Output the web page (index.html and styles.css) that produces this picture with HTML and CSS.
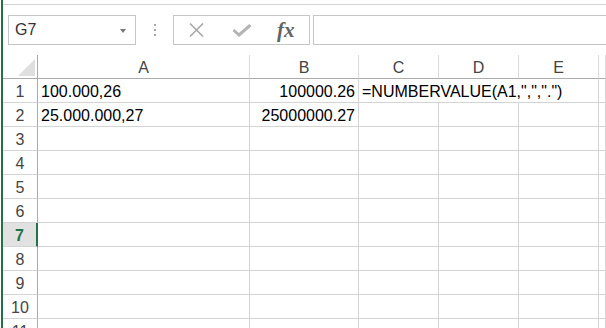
FILE: index.html
```html
<!DOCTYPE html>
<html lang="en">

<head>
    <meta charset="UTF-8">
    <title>NUMBERVALUE</title>
    <link rel="stylesheet" href="styles.css">
</head>

<body>
    <div class="app">
        <div class="ribbon-edge"></div>

        <!-- Formula bar -->
        <div class="formula-bar">
            <div class="name-box">
                <span>G7</span>
                <span class="drop-arrow"></span>
            </div>
            <div class="grip">
                <span></span><span></span><span></span>
            </div>
            <div class="fx-box">
                <svg class="icon-cancel" width="17" height="14" viewBox="0 0 17 14">
                    <path d="M2 0.5 L15 13.5 M15 0.5 L2 13.5" stroke="#a8a8a8" stroke-width="1.6" fill="none" />
                </svg>
                <svg class="icon-enter" width="20" height="13" viewBox="0 0 20 13">
                    <path d="M1.5 6 L7 11 L18.5 1" stroke="#b4b4b4" stroke-width="3" fill="none" />
                </svg>
                <span class="fx">fx</span>
            </div>
            <div class="formula-input"></div>
        </div>

        <!-- Sheet -->
        <div class="sheet">
            <div class="corner"><span class="corner-mark"></span></div>
            <div class="col-head">A</div>
            <div class="col-head">B</div>
            <div class="col-head">C</div>
            <div class="col-head">D</div>
            <div class="col-head">E</div>
            <div class="col-head"></div>

            <div class="row-head">1</div>
            <div class="cell">100.000,26</div>
            <div class="cell num">100000.26</div>
            <div class="cell span3">=NUMBERVALUE(A1,",",".")</div>
            <div class="cell"></div>

            <div class="row-head">2</div>
            <div class="cell">25.000.000,27</div>
            <div class="cell num">25000000.27</div>
            <div class="cell"></div>
            <div class="cell"></div>
            <div class="cell"></div>
            <div class="cell"></div>

            <div class="row-head">3</div>
            <div class="cell"></div><div class="cell"></div><div class="cell"></div><div class="cell"></div><div class="cell"></div><div class="cell"></div>
            <div class="row-head">4</div>
            <div class="cell"></div><div class="cell"></div><div class="cell"></div><div class="cell"></div><div class="cell"></div><div class="cell"></div>
            <div class="row-head">5</div>
            <div class="cell"></div><div class="cell"></div><div class="cell"></div><div class="cell"></div><div class="cell"></div><div class="cell"></div>
            <div class="row-head">6</div>
            <div class="cell"></div><div class="cell"></div><div class="cell"></div><div class="cell"></div><div class="cell"></div><div class="cell"></div>
            <div class="row-head active">7</div>
            <div class="cell"></div><div class="cell"></div><div class="cell"></div><div class="cell"></div><div class="cell"></div><div class="cell"></div>
            <div class="row-head">8</div>
            <div class="cell"></div><div class="cell"></div><div class="cell"></div><div class="cell"></div><div class="cell"></div><div class="cell"></div>
            <div class="row-head">9</div>
            <div class="cell"></div><div class="cell"></div><div class="cell"></div><div class="cell"></div><div class="cell"></div><div class="cell"></div>
            <div class="row-head">10</div>
            <div class="cell"></div><div class="cell"></div><div class="cell"></div><div class="cell"></div><div class="cell"></div><div class="cell"></div>
            <div class="row-head">11</div>
            <div class="cell"></div><div class="cell"></div><div class="cell"></div><div class="cell"></div><div class="cell"></div><div class="cell"></div>
        </div>
    </div>
</body>

</html>
```

FILE: styles.css
```css
html,
body {
    margin: 0;
    padding: 0;
    background-color: #fff;
    overflow: hidden;
}

body {
    font-family: "Liberation Sans", Arial, sans-serif;
    font-size: 16px;
    color: #000;
}

.app {
    margin-left: 1px;
    border-left: 2px solid #217346;
    height: 328px;
    overflow: hidden;
}

.ribbon-edge {
    height: 4px;
    border-bottom: 1px solid #d4d4d4;
}

/* Formula bar */
.formula-bar {
    display: flex;
    align-items: stretch;
    height: 30px;
    margin: 10px 0 10px 5px;
}

.name-box {
    box-sizing: border-box;
    width: 128px;
    border: 1px solid #c6c6c6;
    display: flex;
    align-items: center;
    justify-content: space-between;
    padding: 0 9px 0 6px;
    color: #333;
}

.drop-arrow {
    width: 0;
    height: 0;
    border-left: 3.5px solid transparent;
    border-right: 3.5px solid transparent;
    border-top: 4px solid #777;
    margin-top: 2px;
}

.grip {
    width: 37px;
    display: flex;
    flex-direction: column;
    align-items: center;
    justify-content: center;
    gap: 3px;
}

.grip span {
    width: 2px;
    height: 2px;
    background-color: #a6a6a6;
}

.fx-box {
    box-sizing: border-box;
    width: 137px;
    border: 1px solid #c6c6c6;
    display: flex;
    align-items: center;
}

.icon-cancel {
    margin-left: 14px;
}

.icon-enter {
    margin-left: 27px;
    margin-top: 1px;
}

.fx {
    margin-left: 25px;
    font-family: "Liberation Serif", "Times New Roman", serif;
    font-style: italic;
    font-weight: bold;
    font-size: 21px;
    color: #636363;
    margin-top: 1px;
}

.formula-input {
    box-sizing: border-box;
    flex: 1;
    margin-left: 3px;
    margin-right: -4px;
    border: 1px solid #c6c6c6;
}

/* Sheet */
.sheet {
    display: grid;
    grid-template-columns: 35px 212px 109px 80px 80px 80px 1fr;
    grid-auto-rows: 24px;
}

.sheet > div {
    box-sizing: border-box;
    padding: 3px 3px 0;
    line-height: 20px;
    white-space: nowrap;
}

.corner {
    border-right: 1px solid #ababab;
    border-bottom: 1px solid #ababab;
    display: flex;
    justify-content: flex-end;
    align-items: flex-end;
}

.sheet > .corner {
    padding: 0 2px 2px 0;
}

.corner-mark {
    width: 17px;
    height: 17px;
    background-color: #dfdfdf;
    clip-path: polygon(100% 0, 100% 100%, 0 100%);
}

.col-head {
    text-align: center;
    color: #444;
    border-right: 1px solid #dadada;
    border-bottom: 1px solid #ababab;
}

.row-head {
    text-align: center;
    color: #444;
    border-right: 1px solid #ababab;
    border-bottom: 1px solid #d4d4d4;
}

.row-head.active {
    background-color: #e1e1e1;
    color: #217346;
    font-weight: bold;
    border-right: 2px solid #217346;
}

.cell {
    border-right: 1px solid #d4d4d4;
    border-bottom: 1px solid #d4d4d4;
}

.cell.num {
    text-align: right;
}

.cell.span3 {
    grid-column: span 3;
}
```
